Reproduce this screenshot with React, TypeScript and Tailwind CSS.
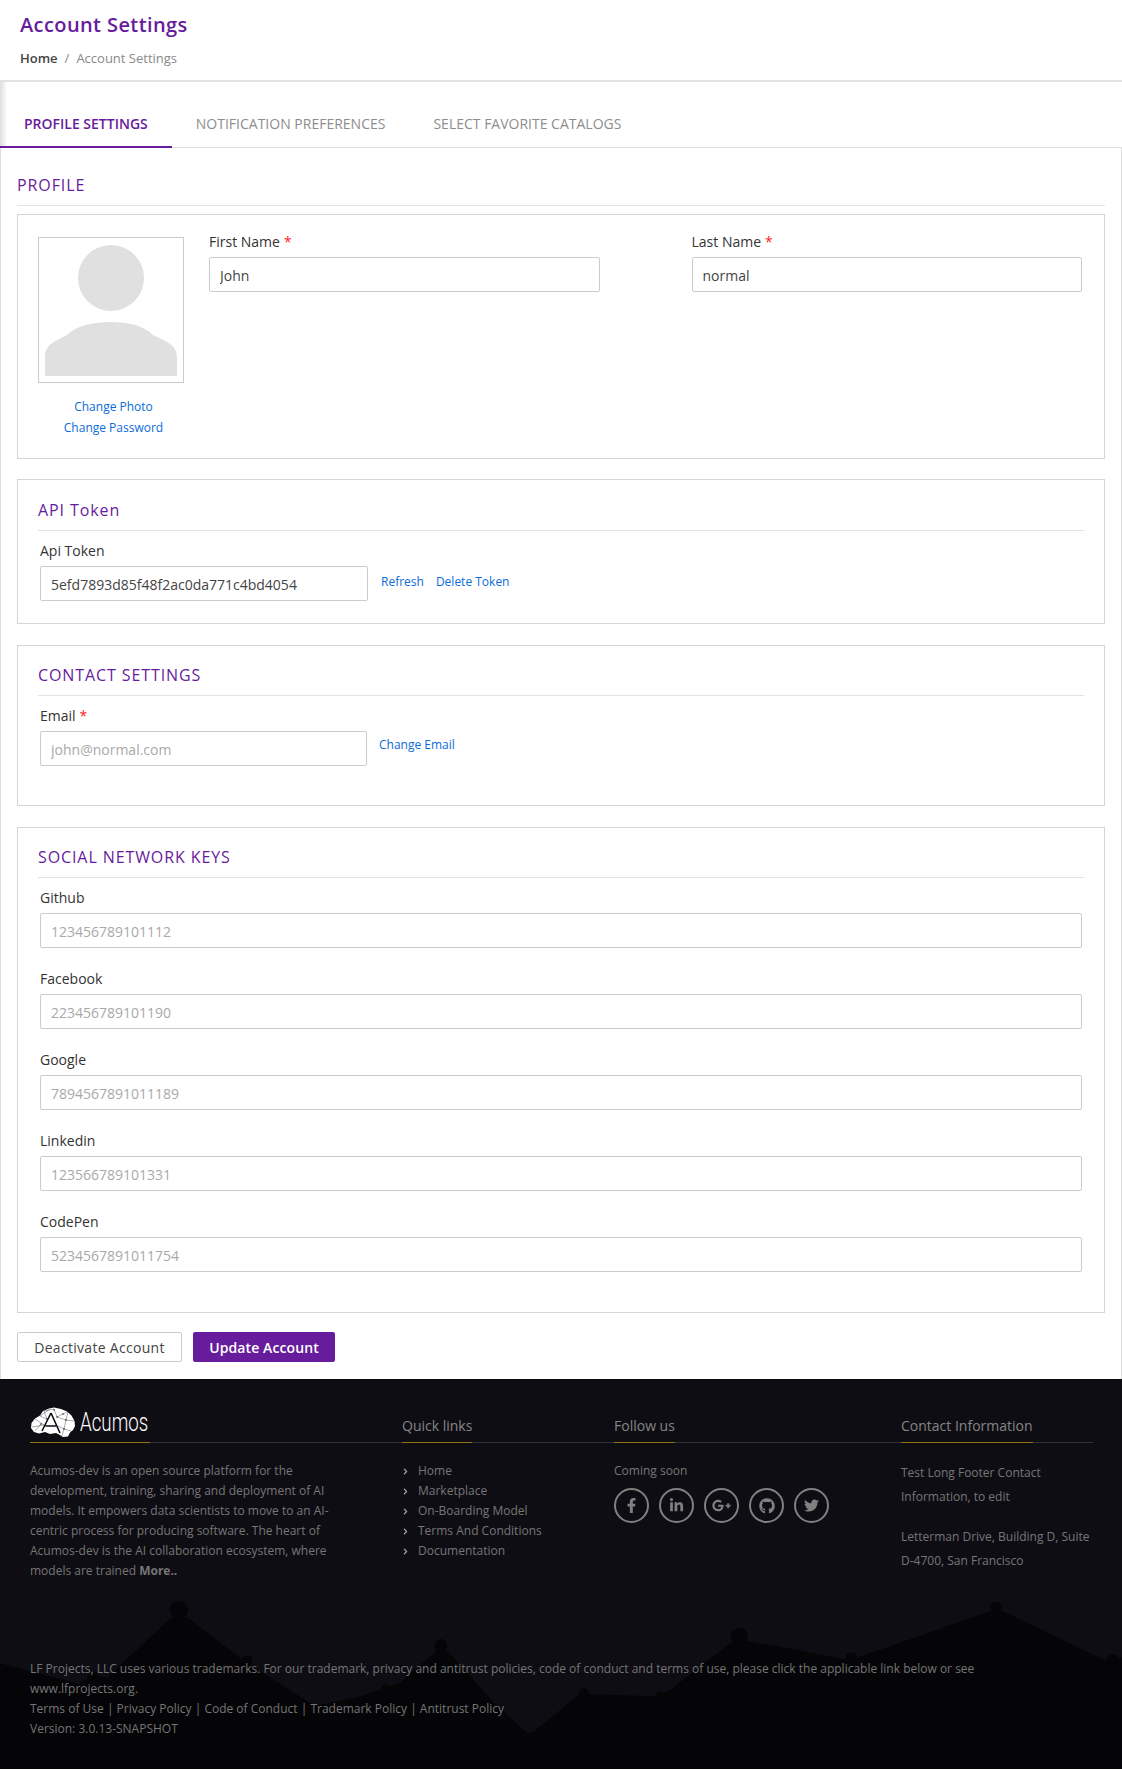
import type { ReactNode } from "react";
import { FaChevronRight, FaFacebookF, FaGithub, FaGooglePlusG, FaLinkedinIn, FaTwitter } from "react-icons/fa";

const SOCIAL_KEYS = [
  { label: "Github", value: "123456789101112" },
  { label: "Facebook", value: "223456789101190" },
  { label: "Google", value: "7894567891011189" },
  { label: "Linkedin", value: "123566789101331" },
  { label: "CodePen", value: "5234567891011754" },
];

const QUICK_LINKS = ["Home", "Marketplace", "On-Boarding Model", "Terms And Conditions", "Documentation"];

const SOCIAL_ICONS = [
  { Icon: FaFacebookF, size: "h-[15px] w-[15px]" },
  { Icon: FaLinkedinIn, size: "h-[15px] w-[15px]" },
  { Icon: FaGooglePlusG, size: "h-[19px] w-[19px]" },
  { Icon: FaGithub, size: "h-[16px] w-[16px]" },
  { Icon: FaTwitter, size: "h-[15px] w-[15px]" },
];

const ROOFS: [number, number, number, number][] = [
  [250, 122, 13, 26],
  [345, 275, 8, 16],
  [130, 322, 8, 14],
  [540, 362, 8, 16],
  [616, 230, 9, 20],
  [816, 372, 7, 14],
  [923, 380, 7, 13],
  [1033, 200, 12, 23],
  [1190, 265, 8, 15],
  [1392, 114, 8, 16],
  [1555, 270, 8, 15],
];

function Label({ children, required }: { children: ReactNode; required?: boolean }) {
  return (
    <label className="block h-5 text-sm leading-5 text-[#333]">
      {children}
      {required && <span className="ml-1 text-[#f22]">*</span>}
    </label>
  );
}

function TextInput({ value, muted, className }: { value: string; muted?: boolean; className?: string }) {
  return (
    <input
      readOnly
      value={value}
      className={`mt-[5px] block h-[35px] rounded-[2px] border border-[#ccc] bg-white px-[10px] pt-[2px] text-sm outline-none ${muted ? "text-[#a9a9a9]" : "text-[#444]"} ${className ?? "w-full"}`}
    />
  );
}

function Card({ title, children, className }: { title: string; children: ReactNode; className: string }) {
  return (
    <div className={`border border-[#d5d5d5] px-5 ${className}`}>
      <h3 className="border-b border-[#e3e3e3] pb-2 text-base leading-6 font-medium tracking-[0.9px] text-[#671c9d]">{title}</h3>
      <div className="px-[2px] pt-[10px]">{children}</div>
    </div>
  );
}

function FooterHeading({ children }: { children: ReactNode }) {
  return (
    <div className="flex h-9 items-end border-b border-[#333238]">
      <div className="-mb-px border-b border-[#927414] pb-[5px]">{children}</div>
    </div>
  );
}

function BrainLogo() {
  return (
    <svg viewBox="0 0 45 30" className="h-[30px] w-[45px] shrink-0">
      <path
        d="M1 21 L1.5 16 L5 11.5 L10 8.5 L13 4 L19 1.5 L24 0.5 L31 2 L37 4.5 L41.5 8.5 L44.5 14 L45 19 L43 23 L40 25.5 L38 29.5 L33 30 L29 27.5 L26 26 L20 27 L15 25 L9 26.5 L4 25 Z"
        fill="#fff"
      />
      <path d="M21 6 L12 24 M21 6 L30 26 M15.5 19 L26 19" stroke="#0f0d14" strokeWidth="1.6" fill="none" />
      <path
        d="M5 12 L14 18 L2 20 M10 9 L17 12 L14 4 L24 2 L27 10 L37 5 M27 10 L36 13 L44 14 M36 13 L34 22 L41 24 M28 19 L34 22 L32 29 M5 24 L11 17 M20 2 L10 9 M36 13 L38 5"
        stroke="#0f0d14"
        strokeWidth="0.35"
        fill="none"
      />
      <g fill="#0f0d14">
        <circle cx="17" cy="12" r="0.7" />
        <circle cx="27" cy="10" r="0.7" />
        <circle cx="33" cy="7" r="0.7" />
        <circle cx="36" cy="13" r="0.7" />
        <circle cx="34" cy="22" r="0.7" />
        <circle cx="11" cy="17" r="0.7" />
        <circle cx="24" cy="3" r="0.7" />
      </g>
    </svg>
  );
}

function Skyline() {
  return (
    <svg viewBox="0 0 1568 600" preserveAspectRatio="none" className="absolute bottom-0 left-0 h-[200px] w-full">
      <path
        d="M0 283 L110 345 L130 320 L150 325 L240 145 L262 145 L340 275 L440 410 L500 385 L535 360 L560 340 L610 245 L625 245 L690 400 L735 490 L745 490 L810 375 L920 382 L935 365 L1025 215 L1045 215 L1180 270 L1200 265 L1385 125 L1400 125 L1550 280 L1568 265 L1568 600 L0 600 Z"
        fill="#050507"
      />
      {ROOFS.map(([cx, cy, rx, ry]) => (
        <ellipse key={cx} cx={cx} cy={cy} rx={rx} ry={ry} fill="#050507" />
      ))}
    </svg>
  );
}

export default function App() {
  return (
    <div className="min-h-[1770px] bg-white font-['Open_Sans',sans-serif] text-[#333]">
      <header className="h-[82px] border-b-2 border-[#e2e2e2] px-5 pt-[11px]">
        <h1 className="text-xl leading-7 font-semibold tracking-[0.4px] text-[#671c9d]">Account Settings</h1>
        <div className="mt-[9px] flex text-[13px] leading-5">
          <span className="font-semibold text-[#444]">Home</span>
          <span className="mx-[7px] text-[#888]">/</span>
          <span className="text-[#888]">Account Settings</span>
        </div>
      </header>

      <div className="relative flex h-[66px] items-end border-b border-[#ddd]">
        <div className="absolute top-0 left-0 h-[65px] w-[7px] bg-gradient-to-r from-[#dedede] to-white" />
        <div className="relative -mb-px flex h-[45px] items-center border-b-2 border-[#671c9d] px-6 pb-[2px] text-sm font-semibold text-[#671c9d]">PROFILE SETTINGS</div>
        <div className="flex h-[45px] items-center px-6 pb-[2px] text-sm text-[#8d8d8d]">NOTIFICATION PREFERENCES</div>
        <div className="flex h-[45px] items-center px-6 pb-[2px] text-sm text-[#8d8d8d]">SELECT FAVORITE CATALOGS</div>
      </div>

      <main className="border-x border-[#ddd] px-4 pt-[27px] pb-[17px]">
        <h2 className="border-b border-[#e3e3e3] pb-[10px] text-base leading-5 font-medium tracking-[0.9px] text-[#671c9d]">PROFILE</h2>

        <div className="mt-2 flex h-[245px] gap-5 border border-[#d5d5d5] pt-[17px] pr-[22px] pl-5">
          <div className="mt-[5px] w-[151px] text-center text-xs leading-[21px] text-[#0b6cd8]">
            <div className="flex h-[146px] w-[146px] items-end justify-center border border-[#ccc] bg-white pb-[6px]">
              <svg viewBox="0 0 132 131" className="h-[131px] w-[132px]">
                <ellipse cx="66" cy="33" rx="33" ry="33" fill="#e0e0e0" />
                <path d="M0 131 L0 112 C0 100 8 97 22 90 C32 80 50 77 66 77 C82 77 98 80 108 90 C122 97 132 100 132 112 L132 131 Z" fill="#e0e0e0" />
              </svg>
            </div>
            <div className="mt-[13px]">Change Photo</div>
            <div>Change Password</div>
          </div>
          <div className="flex flex-1 gap-[92px]">
            <div className="flex-1">
              <Label required>First Name</Label>
              <TextInput value="John" />
            </div>
            <div className="flex-1">
              <Label required>Last Name</Label>
              <TextInput value="normal" />
            </div>
          </div>
        </div>

        <Card title="API Token" className="mt-5 h-[145px] pt-[18px]">
          <Label>Api Token</Label>
          <div className="flex">
            <TextInput value="5efd7893d85f48f2ac0da771c4bd4054" className="w-[328px]" />
            <span className="mt-[7px] ml-[13px] text-xs leading-[27px] text-[#0b6cd8]">Refresh</span>
            <span className="mt-[7px] ml-3 text-xs leading-[27px] text-[#0b6cd8]">Delete Token</span>
          </div>
        </Card>

        <Card title="CONTACT SETTINGS" className="mt-[21px] h-[161px] pt-[17px]">
          <Label required>Email</Label>
          <div className="flex">
            <TextInput muted value="john@normal.com" className="w-[327px]" />
            <span className="mt-[5px] ml-3 text-xs leading-[27px] text-[#0b6cd8]">Change Email</span>
          </div>
        </Card>

        <Card title="SOCIAL NETWORK KEYS" className="mt-[21px] pt-[17px] pb-10">
          <div className="flex flex-col gap-[21px]">
            {SOCIAL_KEYS.map((item) => (
              <div key={item.label}>
                <Label>{item.label}</Label>
                <TextInput muted value={item.value} />
              </div>
            ))}
          </div>
        </Card>

        <div className="mt-[19px] flex gap-[11px]">
          <button className="h-[30px] w-[165px] rounded-[2px] border border-[#ccc] bg-white pt-[2px] text-sm font-medium tracking-[0.3px] text-[#444]">Deactivate Account</button>
          <button className="h-[30px] w-[142px] rounded-[2px] bg-[#671c9d] pt-[2px] text-sm font-semibold tracking-[0.1px] text-white">Update Account</button>
        </div>
      </main>

      <footer className="relative h-[390px] overflow-hidden bg-[#0f0d14] text-xs leading-5 text-[#767676]">
        <Skyline />
        <div className="relative pt-7 pl-[30px]">
          <div className="flex">
            <div className="w-[372px]">
              <FooterHeading>
                <div className="flex w-[120px] items-center gap-[5px]">
                  <BrainLogo />
                  <div className="w-[70px] origin-left scale-x-[0.72] font-['Roboto',sans-serif] text-[26px] leading-[30px] font-light text-white">Acumos</div>
                </div>
              </FooterHeading>
              <p className="mt-[18px] w-[305px]">
                Acumos-dev is an open source platform for the development, training, sharing and deployment of AI models. It empowers data scientists to move to an AI-centric process for producing software. The heart of Acumos-dev is the AI collaboration ecosystem, where models are trained <strong className="font-bold">More..</strong>
              </p>
            </div>
            <div className="w-[212px]">
              <FooterHeading><span className="text-sm text-[#858585]">Quick links</span></FooterHeading>
              <ul className="mt-[18px]">
                {QUICK_LINKS.map((link) => (
                  <li key={link} className="flex items-center">
                    <FaChevronRight className="mr-[9px] h-[7px] w-[7px] text-[#aaa]" />
                    {link}
                  </li>
                ))}
              </ul>
            </div>
            <div className="w-[287px]">
              <FooterHeading><span className="text-sm text-[#858585]">Follow us</span></FooterHeading>
              <div className="mt-[18px]">Coming soon</div>
              <div className="mt-[7px] flex gap-[10px]">
                {SOCIAL_ICONS.map(({ Icon, size }, index) => (
                  <span key={index} className="flex h-[35px] w-[35px] items-center justify-center rounded-full border-2 border-[#808080] text-[#808080]">
                    <Icon className={size} />
                  </span>
                ))}
              </div>
            </div>
            <div className="w-[192px]">
              <FooterHeading><span className="text-sm text-[#858585]">Contact Information</span></FooterHeading>
              <div className="mt-[18px] leading-6">
                <p>Test Long Footer Contact Information, to edit</p>
                <p className="mt-4">Letterman Drive, Building D, Suite D-4700, San Francisco</p>
              </div>
            </div>
          </div>
          <div className="mt-[78px] w-[960px]">
            <p>LF Projects, LLC uses various trademarks. For our trademark, privacy and antitrust policies, code of conduct and terms of use, please click the applicable link below or see www.lfprojects.org.</p>
            <p>Terms of Use | Privacy Policy | Code of Conduct | Trademark Policy | Antitrust Policy</p>
            <p>Version: 3.0.13-SNAPSHOT</p>
          </div>
        </div>
      </footer>
    </div>
  );
}
